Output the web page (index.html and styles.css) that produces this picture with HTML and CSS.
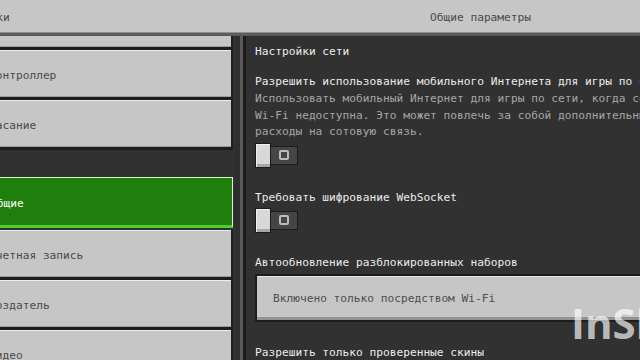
FILE: index.html
```html
<!DOCTYPE html>
<html lang="ru">
<head>
<meta charset="utf-8">
<title>Общие параметры</title>
<link rel="stylesheet" href="styles.css">
</head>
<body>
<div class="screen">
  <header class="hdr">
    <span class="hdr-back">Настройки</span>
    <span class="hdr-title">Общие параметры</span>
  </header>
  <div class="body">
    <nav class="left">
      <div class="btn first"></div>
      <div class="btn">Контроллер</div>
      <div class="btn">Касание</div>
      <div class="btn sel">Общие</div>
      <div class="btn">Учетная запись</div>
      <div class="btn">Создатель</div>
      <div class="btn">Видео</div>
    </nav>
    <div class="divider"></div>
    <main class="panel">
      <div class="content">
        <h2 class="sec-title">Настройки сети</h2>
        <div class="group">
          <div class="label">Разрешить использование мобильного Интернета для игры по сети</div>
          <div class="desc">Использовать мобильный Интернет для игры по сети, когда сеть Wi-Fi недоступна. Это может повлечь за собой дополнительные расходы на сотовую связь.</div>
          <div class="toggle"><span class="knob"></span><span class="track"><span class="ring"></span></span></div>
        </div>
        <div class="group">
          <div class="label">Требовать шифрование WebSocket</div>
          <div class="toggle"><span class="knob"></span><span class="track"><span class="ring"></span></span></div>
        </div>
        <div class="group">
          <div class="label">Автообновление разблокированных наборов</div>
          <div class="dropdown">Включено только посредством Wi-Fi</div>
        </div>
        <div class="group">
          <div class="label">Разрешить только проверенные скины</div>
        </div>
      </div>
    </main>
  </div>
  <div class="wm">InShot</div>
</div>
</body>
</html>
```
FILE: styles.css
```css
* { box-sizing: border-box; }
html, body { margin: 0; padding: 0; background: #313131; }
.screen {
  position: relative;
  width: 640px;
  height: 360px;
  overflow: hidden;
  font-family: "DejaVu Sans Mono", "Liberation Mono", monospace;
  font-size: 11.2px;
  line-height: 17px;
  white-space: nowrap;
}
.hdr {
  height: 36px;
  background: #c6c6c6;
  border-bottom: 3px solid #5b5b5b;
  box-shadow: inset 0 -1px #8e8e8e;
  display: flex;
  align-items: center;
  padding-top: 2px;
  color: #4a4a4a;
}
.hdr-back { width: 481px; margin-left: -51px; flex: none; }
.hdr-title { flex: none; }
.body {
  display: flex;
  height: 324px;
}
.left {
  width: 275px;
  margin-left: -40px;
  flex: none;
  background: #313131;
  overflow: hidden;
}
.btn {
  width: 273px;
  height: 50px;
  background: #c6c6c6;
  border-bottom: 3px solid #1d1d1d;
  border-right: 2px solid #1d1d1d;
  box-shadow: inset 0 1px #ececec, inset 0 -1px #9c9c9c;
  display: flex;
  align-items: center;
  padding-left: 29px;
  padding-top: 4px;
  color: #4a4a4a;
}
.btn.first { margin-top: -36px; }
.btn.sel {
  margin-top: 27px;
  height: 51px;
  margin-bottom: 2px;
  width: 273px;
  background: #1f7f0d;
  border: 1px solid #e2efdc;
  border-bottom: 3px solid #4fcd2d;
  box-shadow: none;
  color: #ffffff;
}
.divider {
  width: 11px;
  flex: none;
  background: linear-gradient(to right, #2e2e2e 0 5px, #5a5a5a 5px 8px, #1c1c1c 8px 11px);
}
.panel {
  flex: 1;
  min-width: 0;
  background: #313131;
  padding: 7px 0 0 9px;
}
.content { width: 420px; }
.sec-title {
  margin: 0 0 12.5px;
  font-size: 11.2px;
  font-weight: normal;
  color: #ececec;
}
.group { display: flex; flex-direction: column; gap: 1.5px; }
.group + .group { margin-top: 21.5px; }
.label { color: #ececec; }
.desc {
  color: #a6a6a6;
  white-space: normal;
  line-height: 16.7px;
}
.toggle {
  display: flex;
  align-items: center;
  width: 43px;
  height: 25px;
}
.knob {
  width: 16px;
  height: 25px;
  border: 1px solid #1a1a1a;
  background: #d8d8d8;
  box-shadow: inset 1px 1px #f0f0f0, inset 0 -3px #a8a8a8;
}
.track {
  width: 27px;
  height: 19px;
  background: #454545;
  border: 1px solid #1b1b1b;
  border-left: none;
  display: flex;
  align-items: center;
  justify-content: center;
}
.ring {
  width: 10px;
  height: 10px;
  border: 2px solid #bcbcbc;
  border-radius: 2px;
}
.dropdown {
  margin-top: 1.5px;
  height: 48px;
  background: #c6c6c6;
  border: 2px solid #1c1c1c;
  box-shadow: inset 0 1px #e6e6e6, inset 0 -3px #929292;
  display: flex;
  align-items: center;
  padding-left: 16px;
  color: #4e4e4e;
}
.wm {
  position: absolute;
  left: 571px;
  top: 298px;
  font-family: "Open Sans", "Liberation Sans", sans-serif;
  font-weight: 700;
  font-size: 42px;
  line-height: 50px;
  letter-spacing: 0;
  color: rgba(255, 255, 255, 0.68);
}
```
